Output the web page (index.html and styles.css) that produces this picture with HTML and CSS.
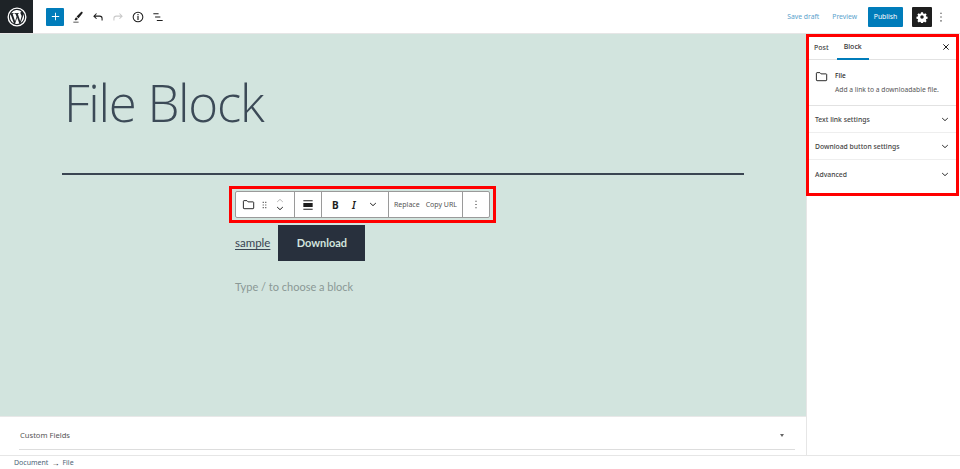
FILE: index.html
```html
<!DOCTYPE html>
<html lang="en">
<head>
<meta charset="utf-8">
<title>File Block</title>
<link rel="stylesheet" href="styles.css">
</head>
<body>
<header class="topbar">
  <div class="wp-logo">
    <svg viewBox="0 0 24 24" width="20" height="20"><circle cx="12" cy="12" r="10.6" fill="none" stroke="#fff" stroke-width="1.6"/><path fill="#fff" d="M3.6 12c0 3.3 1.900 6.200 4.700 7.500L4.300 8.600A8.400 8.400 0 0 0 3.600 12zm14-.4c0-1-.4-1.700-.7-2.300-.4-.7-.8-1.300-.8-2 0-.8.600-1.500 1.400-1.500h.1A8.400 8.400 0 0 0 5 7.400h.5c.9 0 2.200-.1 2.200-.1.400 0 .5.600 0 .7l-1 .1 3 9 1.800-5.400-1.300-3.600-.9-.1c-.4 0-.4-.7.100-.7 0 0 1.400.1 2.200.1.900 0 2.200-.1 2.200-.1.400 0 .5.600 0 .7l-.9.1 3 8.900.8-2.800c.3-1.100.6-2 .6-2.700zm-5.400 1.100l-2.500 7.300a8.400 8.400 0 0 0 5.200-.1l-.1-.1zm7.200-4.700l.1.900c0 .9-.2 1.800-.6 3l-2.600 7.400a8.400 8.400 0 0 0 3.100-11.300z"/></svg>
  </div>
  <div class="tools">
    <button class="add-btn"><svg viewBox="0 0 24 24" width="11" height="11"><path d="M11 4h2v7h7v2h-7v7h-2v-7H4v-2h7z" fill="#fff"/></svg></button>
    <svg class="tool" viewBox="0 0 24 24" width="14" height="14"><path fill="#1e1e1e" d="M19.500 3.500c.8.700.6 1.700-.1 2.600l-6.500 7.900-3.300-2.700 7.200-7.500c.8-.8 1.900-1 2.700-.3zM8.800 12.400l2.900 2.400c-.7 2-2.800 3-6 2.400 1.500-1 1-3.500 3.100-4.800zM4 20h9v1.500H4z"/></svg>
    <svg class="tool" viewBox="0 0 24 24" width="14" height="14"><path fill="none" stroke="#1e1e1e" stroke-width="1.800" d="M9.500 6 5 10.500 9.500 15M5 10.500h10c2.500 0 4 1.700 4 4V18"/></svg>
    <svg class="tool" viewBox="0 0 24 24" width="14" height="14"><path fill="none" stroke="#c9c9c9" stroke-width="1.800" d="M14.500 6 19 10.500 14.500 15M19 10.500H9c-2.500 0-4 1.700-4 4V18"/></svg>
    <svg class="tool" viewBox="0 0 24 24" width="14" height="14"><circle cx="12" cy="12" r="8.300" fill="none" stroke="#1e1e1e" stroke-width="1.800"/><path fill="#1e1e1e" d="M11 7h2v2h-2zm0 3.200h2V17h-2z"/></svg>
    <svg class="tool" viewBox="0 0 24 24" width="14" height="14"><path fill="#1e1e1e" d="M4 5.500h9v1.800H4zM7 11.200h9V13H7zM10 17h10v1.800H10z"/></svg>
  </div>
  <div class="actions">
    <span class="link">Save draft</span>
    <span class="link">Preview</span>
    <button class="publish">Publish</button>
    <button class="settings"><svg viewBox="0 0 24 24" width="12" height="12"><path fill="#fff" fill-rule="evenodd" d="M10 2.500h4l.5 2.700 1.700.7 2.300-1.600 2.800 2.800-1.600 2.300.7 1.700 2.700.5v4l-2.700.5-.7 1.700 1.600 2.300-2.800 2.800-2.300-1.600-1.700.7-.5 2.700h-4l-.5-2.700-1.700-.7-2.300 1.600-2.800-2.800 1.600-2.300-.7-1.700-2.700-.5v-4l2.700-.5.7-1.700-1.600-2.300 2.800-2.800 2.300 1.600 1.700-.7zM12 8.500a3.500 3.500 0 1 0 0 7 3.500 3.500 0 0 0 0-7z"/></svg></button>
    <svg class="kebab" viewBox="0 0 24 24" width="14" height="14"><path fill="#1e1e1e" d="M11 4.500h2v2h-2zm0 6.500h2v2h-2zm0 6.500h2v2h-2z"/></svg>
  </div>
</header>

<div class="workspace">
  <main class="editor">
    <section class="canvas">
      <h1 class="title">File Block</h1>
      <hr class="rule">
      <div class="block-area">
        <div class="toolbar-highlight">
          <div class="toolbar">
            <div class="group g-block">
              <svg viewBox="0 0 24 24" width="15" height="15"><path fill="none" stroke="#1e1e1e" stroke-width="1.500" d="M3.800 6.800c0-.6.400-1 1-1h4.700l1.800 2h8c.6 0 1 .4 1 1v8.900c0 .6-.4 1-1 1H4.800c-.6 0-1-.4-1-1z"/></svg>
              <svg viewBox="0 0 24 24" width="11" height="14"><path fill="#555" d="M8 5h2.500v2.500H8zm5.500 0H16v2.500h-2.500zM8 10.800h2.500v2.500H8zm5.500 0H16v2.500h-2.500zM8 16.500h2.500V19H8zm5.500 0H16V19h-2.500z"/></svg>
              <span class="movers">
                <svg viewBox="0 0 14 8" width="8" height="5"><path fill="none" stroke="#b5b5b5" stroke-width="1.700" d="M2 6.500 7 2l5 4.500"/></svg>
                <svg viewBox="0 0 14 8" width="8" height="5"><path fill="none" stroke="#1e1e1e" stroke-width="1.700" d="M2 1.500 7 6l5-4.500"/></svg>
              </span>
            </div>
            <div class="group g-align">
              <svg viewBox="0 0 24 24" width="14" height="14"><path fill="#1e1e1e" d="M4 4h16v1.600H4zM4 8.500h16v7H4zM4 18.400h16V20H4z"/></svg>
            </div>
            <div class="group g-format">
              <span class="bold">B</span>
              <span class="italic">I</span>
              <svg viewBox="0 0 14 8" width="8" height="5"><path fill="none" stroke="#1e1e1e" stroke-width="1.700" d="M2 1.500 7 6l5-4.500"/></svg>
            </div>
            <div class="group g-text">
              <span>Replace</span>
              <span>Copy URL</span>
            </div>
            <div class="group g-more">
              <svg viewBox="0 0 24 24" width="12" height="15"><path fill="#1e1e1e" d="M11 4.500h2v2h-2zm0 6.500h2v2h-2zm0 6.500h2v2h-2z"/></svg>
            </div>
          </div>
        </div>
        <div class="file-block">
          <a class="file-link">sample</a>
          <span class="download">Download</span>
        </div>
        <p class="placeholder">Type / to choose a block</p>
      </div>
    </section>
    <section class="metabox">
      <div class="metabox-row">
        <span>Custom Fields</span>
        <i class="caret"></i>
      </div>
    </section>
  </main>

  <aside class="sidebar">
    <div class="sidebar-highlight">
      <div class="tabs">
        <span class="tab">Post</span>
        <span class="tab active">Block</span>
        <svg class="close" viewBox="0 0 24 24" width="8" height="8"><path fill="none" stroke="#1e1e1e" stroke-width="3" d="M4 4l16 16M20 4 4 20"/></svg>
      </div>
      <div class="card">
        <svg viewBox="0 0 24 24" width="15" height="15"><path fill="none" stroke="#1e1e1e" stroke-width="1.500" d="M3.800 6.800c0-.6.400-1 1-1h4.700l1.800 2h8c.6 0 1 .4 1 1v8.900c0 .6-.4 1-1 1H4.800c-.6 0-1-.4-1-1z"/></svg>
        <div class="card-text">
          <div class="card-name">File</div>
          <div class="card-desc">Add a link to a downloadable file.</div>
        </div>
      </div>
      <div class="panel"><span>Text link settings</span><svg viewBox="0 0 14 8" width="8" height="5"><path fill="none" stroke="#1e1e1e" stroke-width="1.600" d="M2 1.500 7 6l5-4.500"/></svg></div>
      <div class="panel"><span>Download button settings</span><svg viewBox="0 0 14 8" width="8" height="5"><path fill="none" stroke="#1e1e1e" stroke-width="1.600" d="M2 1.500 7 6l5-4.500"/></svg></div>
      <div class="panel last"><span>Advanced</span><svg viewBox="0 0 14 8" width="8" height="5"><path fill="none" stroke="#1e1e1e" stroke-width="1.600" d="M2 1.500 7 6l5-4.500"/></svg></div>
    </div>
  </aside>
</div>

<footer class="breadcrumbs">
  <span>Document</span><span class="arrow">→</span><span>File</span>
</footer>
</body>
</html>
```

FILE: styles.css
```css
* { box-sizing: border-box; }
html, body { height: 100%; }
body {
  margin: 0;
  height: 469px;
  overflow: hidden;
  display: flex;
  flex-direction: column;
  background: #fff;
  font-family: "Noto Sans", "Liberation Sans", sans-serif;
  color: #1e1e1e;
}
button { border: 0; padding: 0; display: flex; align-items: center; justify-content: center; font-family: inherit; }
svg { display: block; flex: none; }

.topbar {
  flex: 0 0 34px;
  display: flex;
  align-items: center;
  border-bottom: 1px solid #e6e6e6;
  background: #fff;
}
.wp-logo {
  width: 33px;
  height: 33px;
  background: #1e2327;
  display: flex;
  align-items: center;
  justify-content: center;
  align-self: flex-start;
}
.tools { display: flex; align-items: center; gap: 6px; margin-left: 13px; }
.add-btn { width: 18px; height: 18px; background: #007cba; border-radius: 1px; margin-right: 1px; }
.actions { margin-left: auto; margin-right: 11px; display: flex; align-items: center; font-size: 6.800px; }
.link { color: #5a9fcc; }
.link + .link { margin-left: 13px; }
.publish {
  margin-left: 11px;
  width: 35px;
  height: 20px;
  background: #007cba;
  color: #fff;
  font-size: 6.800px;
  border-radius: 1px;
}
.settings { margin-left: 9px; width: 20px; height: 20px; background: #1e1e1e; border-radius: 1px; }
.kebab { margin-left: 2px; margin-right: 1px; }

.workspace { flex: 1; display: flex; min-height: 0; }
.editor { width: 806px; display: flex; flex-direction: column; }
.canvas {
  flex: 1;
  background: #d2e4de;
  padding: 0 62px;
  min-height: 0;
}
.title {
  margin: 35px 0 0 2px;
  font: 300 51px/66px "Open Sans", sans-serif;
  letter-spacing: -1.300px;
  color: #3c4a57;
}
.rule { margin: 38px 0 0; border: 0; height: 2px; background: #3a4552; }
.block-area { width: 260px; margin: 11px 0 0 173px; }
.toolbar-highlight {
  width: 267px;
  height: 37px;
  margin-left: -6px;
  border: 3px solid #f00;
  padding: 2px 3px;
}
.toolbar {
  height: 27px;
  width: 255px;
  display: flex;
  border: 1px solid #9a9a9a;
  background: #fff;
  border-radius: 2px;
}
.group { display: flex; align-items: center; border-right: 1px solid #9a9a9a; height: 100%; }
.group:last-child { border-right: 0; }
.g-block { width: 59px; padding-left: 5px; gap: 3px; }
.movers { display: flex; flex-direction: column; gap: 3px; margin-left: 3px; }
.g-align { width: 27px; justify-content: center; }
.g-format { width: 67px; padding-left: 9px; }
.bold { font: 700 10px/1 "Noto Sans", sans-serif; margin-left: 1px; width: 20px; }
.italic { font: italic 600 10px/1 "Noto Sans", sans-serif; width: 17px; }
.g-text { width: 74px; justify-content: space-between; padding: 0 5px; font-size: 7px; color: #555; }
.g-more { flex: 1; justify-content: center; }

.file-block { display: flex; align-items: center; margin-top: 2px; height: 36px; }
.file-link {
  font: 400 11.500px/1.200 "Lato", sans-serif;
  color: #3a4552;
  text-decoration: underline;
  text-underline-offset: 2px;
}
.download {
  margin-left: 8px;
  width: 87px;
  height: 36px;
  background: #28303d;
  color: #d2e4de;
  font: 700 11px/36px "Lato", sans-serif;
  text-align: center;
}
.placeholder { margin: 18px 0 0; font: 400 11px/16px "Lato", sans-serif; color: #8a9895; }

.metabox { flex: 0 0 39px; padding: 0 11px 0 19px; background: #fff; border-top: 1px solid #e8e8e8; }
.metabox-row {
  height: 33px;
  display: flex;
  align-items: center;
  justify-content: space-between;
  border-bottom: 1px solid #ddd;
  font-size: 7.600px;
  color: #555;
  padding: 4px 11px 0 1px;
}
.caret { width: 0; height: 0; border: 2px solid transparent; border-top: 3px solid #666; border-bottom: 0; }

.sidebar { flex: 1; border-left: 1px solid #e6e6e6; background: #fff; }
.sidebar-highlight { margin: 0 1px 0 -1px; height: 162px; border: 3px solid #f00; }
.tabs { height: 23px; display: flex; align-items: center; font-size: 7px; font-weight: 500; border-bottom: 1px solid #e2e2e2; padding-left: 5px; padding-right: 6px; }
.tab { height: 100%; display: flex; align-items: center; padding-bottom: 2px; color: #444; }
.tab.active { margin-left: 8px; padding: 0 7px 1px; color: #333; border-bottom: 2px solid #007cba; height: 23px; }
.close { margin-left: auto; margin-bottom: 2px; }
.card { height: 46px; display: flex; padding: 9px 0 0 5px; gap: 6px; border-bottom: 1px solid #e2e2e2; }
.card-name { font-size: 6.500px; font-weight: 500; line-height: 10px; margin-top: 2px; }
.card-desc { font-size: 6.700px; color: #555; line-height: 10px; margin-top: 4px; white-space: nowrap; }
.panel {
  height: 27px;
  display: flex;
  align-items: center;
  justify-content: space-between;
  padding: 0 7px 0 6px;
  font-size: 6.800px;
  font-weight: 500;
  color: #444;
  border-bottom: 1px solid #eee;
}
.panel.last { border-bottom: 0; padding-top: 2px; }

.breadcrumbs {
  flex: 0 0 14px;
  display: flex;
  align-items: center;
  padding-left: 14px;
  gap: 3px;
  font-size: 7px;
  color: #4d6578;
  border-top: 1px solid #e6e6e6;
  line-height: 1;
}
.arrow { font-size: 8px; color: #222; }
```
